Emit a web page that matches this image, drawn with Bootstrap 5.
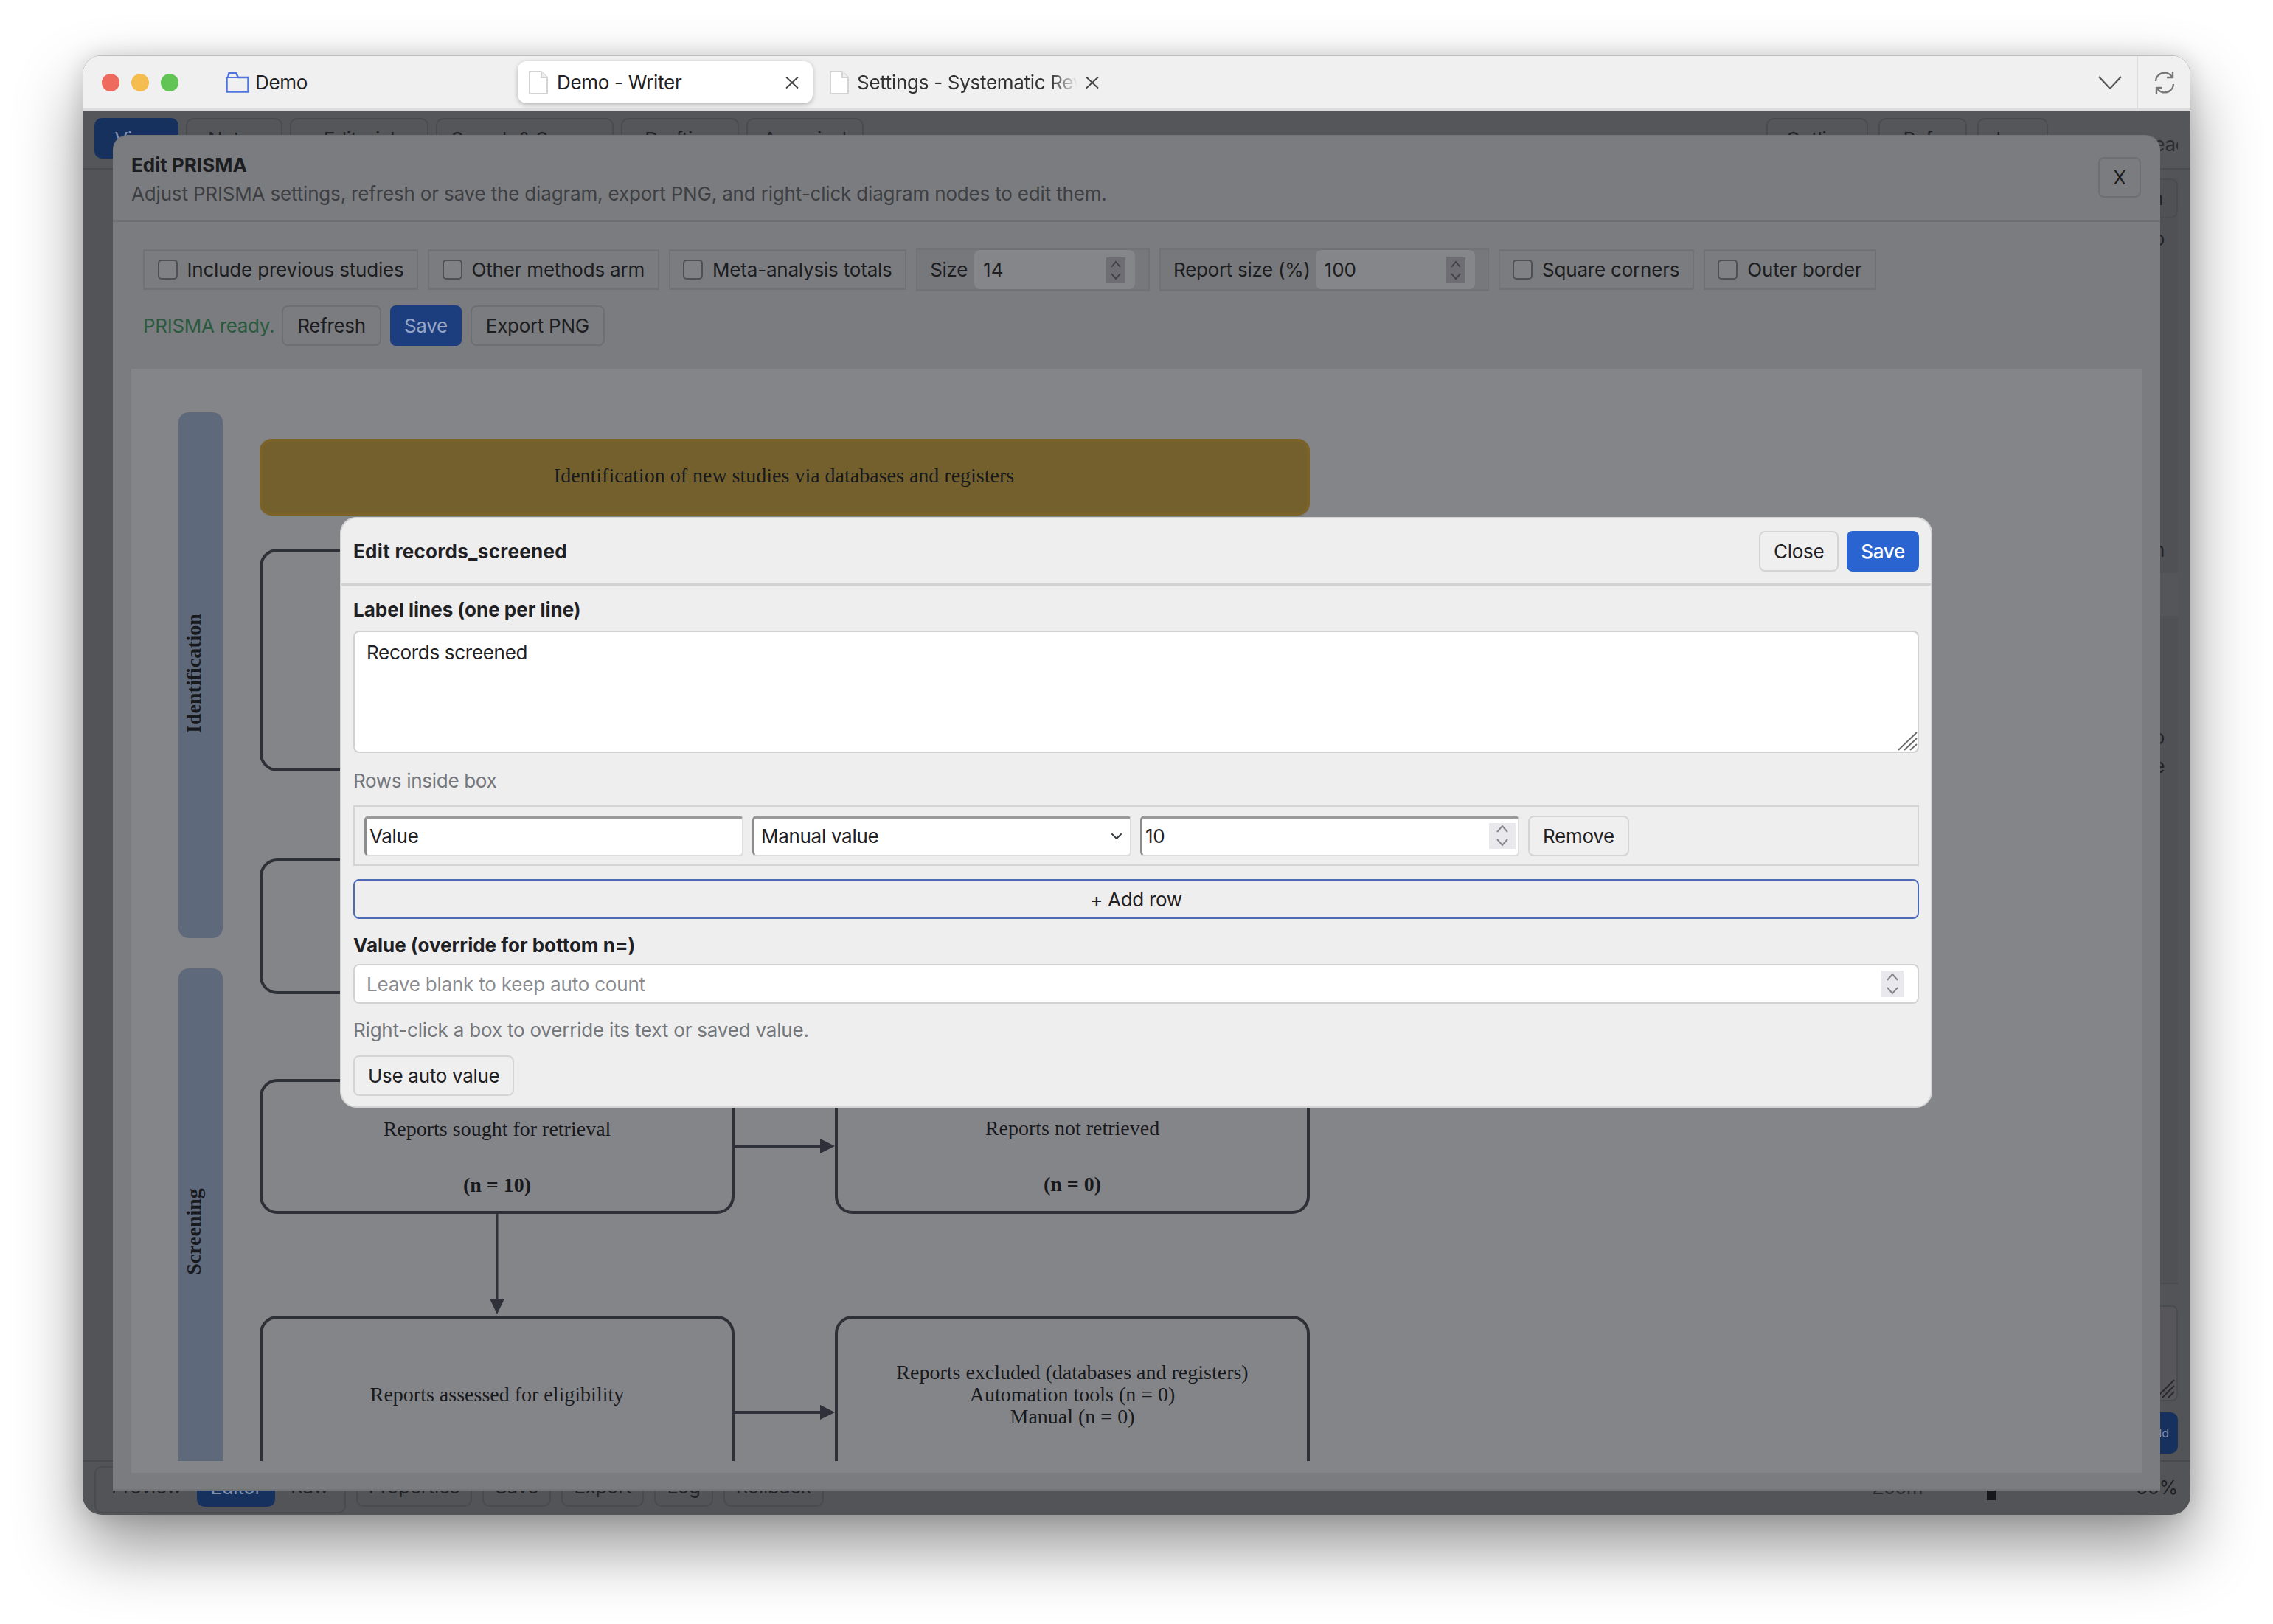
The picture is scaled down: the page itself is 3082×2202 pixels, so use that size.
<!DOCTYPE html>
<html lang="en">
<head>
    <meta charset="UTF-8">
    <meta name="viewport" content="width=device-width, initial-scale=1.0">
    <title>Edit PRISMA</title>
    <link href="https://cdn.jsdelivr.net/npm/bootstrap@5.3.0/dist/css/bootstrap.min.css" rel="stylesheet">
    <style>
        html, body { height: 100%; }
        body { background: #fff; font-family: Inter, "Liberation Sans", sans-serif; font-size: 26px; letter-spacing: -.3px; color: #1f2023; overflow: hidden; }

        /* browser frame */
        .frame { position: absolute; left: 112px; top: 75px; width: 2858px; height: 1979px; border-radius: 26px; overflow: hidden; background: #535458; }
        .frame-shadow { position: absolute; left: 112px; top: 75px; width: 2858px; height: 1979px; border-radius: 26px; box-shadow: 0 44px 90px rgba(0,0,0,.42), 0 0 30px rgba(0,0,0,.14); }
        .titlebar { height: 75px; background: #f0f0f0; border-bottom: 3px solid #dcdcdc; border-top: 1px solid #bdbdbd; }
        .light { width: 24px; height: 24px; border-radius: 50%; }
        .lights { margin-left: 26px; gap: 16px; width: 168px; }
        .tab-folder { gap: 8px; width: 396px; }
        .tab-active { width: 400px; height: 57px; background: #fff; border-radius: 12px; box-shadow: 0 2px 6px rgba(0,0,0,.25); padding: 0 19px 0 15px; gap: 12px; }
        .tab-idle { margin-left: 23px; gap: 11px; }
        .tab-clip { width: 299px; overflow: hidden; white-space: nowrap; -webkit-mask-image: linear-gradient(90deg, #000 88%, transparent 100%); mask-image: linear-gradient(90deg, #000 88%, transparent 100%); color: #333; }
        .chevron-tabs { margin-right: 20px; }
        .bar-side { width: 73px; height: 100%; border-left: 2px solid #dedede; }

        /* dimmed page behind the dialogs */
        .page-top { height: 80px; background: #55565a; border-bottom: 2px solid #4a4b4f; padding: 10px 0 0 16px; gap: 10px; overflow: hidden; }
        .page-btn { height: 55px; border: 2px solid #4a4b4f; border-radius: 10px; background: transparent; color: #222326; display: flex; justify-content: center; align-items: center; padding: 0 22px; white-space: nowrap; flex: none; }
        .page-btn.on { background: #17315f; border-color: #17315f; color: #7f8fb0; }
        .top-tabs > .page-btn { padding-top: 2px; }
        .top-tabs > .page-btn:nth-child(1) { width: 114px; }
        .top-tabs > .page-btn:nth-child(2) { width: 131px; }
        .top-tabs > .page-btn:nth-child(3) { width: 188px; }
        .top-tabs > .page-btn:nth-child(4) { width: 241px; }
        .top-tabs > .page-btn:nth-child(5) { width: 160px; }
        .top-tabs > .page-btn:nth-child(6) { width: 159px; }
        .right-tabs .page-btn { padding-top: 2px; }
        .right-btn-a { width: 138px; }
        .right-btn-b { width: 120px; }
        .right-btn-c { width: 96px; }
        .right-tabs { margin-left: auto; gap: 14px; }
        .page-status { width: 133px; overflow: hidden; white-space: nowrap; margin-left: 33px; margin-right: 17px; color: #2b2c30; padding-top: 2px; }
        .page-main { height: 1750px; }
        .page-side { margin-left: auto; width: 300px; padding-right: 17px; }
        .side-inner { background: #505155; height: 1499px; border-bottom: 2px solid #4a4b4f; text-align: right; padding-right: 18px; color: #222326; }
        .side-card { height: 54px; margin: 12px -18px 0 0; padding-right: 18px; border: 2px solid #4a4b4f; border-radius: 10px; line-height: 50px; }
        .side-o1 { margin-top: 8px; }
        .side-n { margin-top: 383px; }
        .side-band { height: 58px; margin: 12px -18px 0 0; background: #55565a; }
        .side-o2 { margin-top: 145px; }
        .side-area { height: 130px; margin-top: 29px; background: #57575b; border: 2px solid #4a4b4f; border-radius: 8px; position: relative; }
        .side-grip { position: absolute; right: 2px; bottom: 2px; }
        .side-save { display: block; margin: 15px 0 0 auto; height: 56px; width: 200px; background: #17315f; border: 0; border-radius: 10px; text-align: right; padding-right: 12px; color: #7f8fb0; }
        .page-bottom { height: 72px; border-top: 2px solid #48494d; padding: 6px 17px 0 16px; }
        .bottom-group { gap: 14px; }
        .page-btn.tall { padding: 0 15px; }
        .joined { border: 2px solid #4a4b4f; border-radius: 10px; }
        .joined .page-btn { border: 0; border-radius: 10px; height: 51px; }
        .joined .page-btn.tall { padding: 0 21px; }
        .joined .page-btn.on { padding: 0 18px; height: 53px; }
        .zoom-label { margin-left: auto; color: #2b2c30; width: 156px; margin-top: 9px; }
        .zoom-thumb { width: 12px; height: 37px; background: #17181c; margin: 9px 190px 0 0; }
        .zoom-value { margin-top: 9px; }

        /* outer dialog */
        .prisma-dlg { position: absolute; left: 41px; top: 108px; width: 2776px; height: 1838px; background: #7b7c7f; border: 0; border-top: 2px solid #737477; border-bottom: 2px solid #737477; border-radius: 20px 20px 0 0; color: #1c1d20; }
        .prisma-head { height: 116px; border-bottom: 3px solid #6f7073; padding: 0 26px 0 25px; }
        .prisma-title { font-weight: 700; line-height: 36px; margin-top: 21px; letter-spacing: 0; }
        .prisma-sub { color: #3d3f43; line-height: 36px; margin-top: 3px; letter-spacing: -.17px; }
        .prisma-close { width: 58px; height: 55px; margin-top: 28px; padding: 0; background: transparent; border: 2px solid #6e6f73; border-radius: 8px; color: #1c1d20; font-size: 26px; }
        .prisma-tools { padding: 35px 0 0 41px; gap: 19px; }
        .tool-row { gap: 13px; }
        .tool-row-actions { gap: 12px; }
        .tool-box { height: 55px; border: 2px solid #717276; border-top-width: 3px; border-bottom-width: 3px; padding: 0 17.5px; gap: 13px; white-space: nowrap; letter-spacing: -.2px; }
        .tool-box .form-check-input { width: 27px; height: 27px; margin: 0; background-color: #808184; border: 2px solid #4f5055; border-radius: 5px; flex: none; }
        .tool-num { padding: 0; height: 59px; gap: 0; padding-left: 17px; background: #77787b; letter-spacing: -.3px; }
        .tool-num .num-wrap { width: 218px; margin: 0 18px 0 9px; }
        .tool-num.wide .num-wrap { width: 216px; margin: 0 17px 0 7px; }
        .num-wrap { position: relative; }
        .num-wrap .form-control { height: 53px; background: #858689; border: 0; border-radius: 8px; color: #1c1d20; padding: 0 12px; font-size: 26px; }
        .spin { position: absolute; right: 13px; top: 10px; width: 26px; height: 35px; background: #6f6d74; display: flex; justify-content: center; align-items: center; }
        .ready-text { color: #2a5a3e; margin-right: -2px; }
        .btn-dim { height: 55px; padding: 0 19px; background: transparent; border: 2px solid #6e6f73; border-radius: 8px; color: #1c1d20; font-size: 26px; letter-spacing: inherit; }
        .btn-dim-blue { height: 55px; padding: 0 19px; background: #1c3d7e; border: 0; border-radius: 8px; color: #97a5c4; font-size: 26px; letter-spacing: inherit; }
        .diagram-panel { margin: 31px 25px 0 25px; height: 1497px; background: #848589; }
        .diagram-panel svg { display: block; }
        .pr-box { fill: none; stroke: #2e3037; stroke-width: 4; }
        .pr-line { stroke: #2e3139; fill: none; }
        .pr-head { fill: #2e3139; }
        .pr-text { font-family: "Liberation Serif", serif; font-size: 28px; fill: #18191c; text-anchor: middle; letter-spacing: 0; }
        .pr-bold { font-weight: 700; }

        /* inner dialog */
        .node-dlg { position: absolute; left: 349px; top: 626px; width: 2159px; background: #eeeeee; border: 2px solid #d4d4d4; border-radius: 22px; color: #1f2023; }
        .node-head { height: 91px; border-bottom: 3px solid #d2d2d2; padding: 0 16px; }
        .node-title { font-weight: 700; letter-spacing: .3px; }
        .node-actions { gap: 11px; }
        .node-btn { height: 55px; padding: 0 18px; background: #efefef; border: 2px solid #d4d4d4; border-radius: 8px; color: #1f2023; font-size: 26px; letter-spacing: inherit; }
        .node-save { height: 55px; padding: 0 19px; background: #2a64d0; border: 0; border-radius: 8px; color: #fff; font-size: 26px; font-weight: 500; letter-spacing: inherit; }
        .node-body { padding: 15px 16px 14px; }
        .node-label { font-weight: 700; line-height: 36px; margin: 0; letter-spacing: 0; }
        .node-muted { color: #74777b; line-height: 36px; }
        .node-help { margin-top: 18px; letter-spacing: -.2px; }
        .node-next { margin-top: 18px; }
        .node-area { height: 166px; margin-top: 10px; position: relative; }
        .node-area .form-control { height: 100%; resize: none; border: 2px solid #d2d2d2; border-radius: 8px; padding: 8px 16px; font-size: 26px; color: #1f2023; letter-spacing: inherit; }
        .grip { position: absolute; right: 2px; bottom: 3px; }
        .rows-box { height: 82px; margin-top: 15px; border: 2px solid #d4d4d4; padding: 0 13px; gap: 12px; }
        .rows-box .form-control, .rows-box .form-select { flex: 0 0 auto; height: 55px; width: 514px; border-style: solid; border-width: 4px 2px 2px 3px; border-color: #999 #ddd #ddd #8c8c8c; border-radius: 6px; padding: 0 4px 2px; font-size: 26px; color: #1f2023; letter-spacing: inherit; }
        .rows-box .form-select { padding-left: 9px; background-size: 16px 16px; background-position: right 10px center; }
        .rows-box .num-wrap { flex: 0 0 auto; }
        .rows-box .num-wrap .form-control { background: #fff; }
        .rows-box .spin, .value-wrap .spin { background: #e9e9ed; top: 10px; right: 5px; width: 36px; }
        .add-row { display: block; width: 100%; height: 54px; margin-top: 18px; padding: 0; background: transparent; border: 2px solid #4d6bb5; border-radius: 8px; color: #1f2023; font-size: 26px; letter-spacing: inherit; }
        .value-wrap { margin-top: 7px; }
        .value-wrap .form-control { height: 54px; background: #fff; border: 2px solid #d2d2d2; border-radius: 8px; padding: 0 16px; font-size: 26px; letter-spacing: -.2px; }
        .value-wrap .form-control::placeholder { color: #8a8c90; }
        .value-wrap .spin { top: 9px; right: 21px; width: 30px; height: 36px; }
    </style>
</head>
<body>
    <div class="frame-shadow"></div>
    <div class="frame">
        <div class="titlebar d-flex align-items-center">
            <div class="lights d-flex">
                <span class="light" style="background:#ee6a5f"></span>
                <span class="light" style="background:#f5bd4f"></span>
                <span class="light" style="background:#61c454"></span>
            </div>
            <div class="tab-folder d-flex align-items-center">
                <svg width="32" height="29" viewBox="0 0 32 29"><path d="M1.5 8V27.5H30.500V8H17L14 2H4.500L3 8" fill="none" stroke="#4f75e0" stroke-width="2.500"/><path d="M1.500 8H30.500" stroke="#4f75e0" stroke-width="2"/></svg>
                <span>Demo</span>
            </div>
            <div class="tab-active d-flex align-items-center">
                <svg width="26" height="32" viewBox="0 0 26 32"><path d="M1 1H17L25 9V31H1Z" fill="#fff" stroke="#d4d4d4" stroke-width="2"/><path d="M17 1V9H25" fill="#efefef" stroke="#d4d4d4" stroke-width="2"/></svg>
                <span class="flex-grow-1">Demo - Writer</span>
                <svg width="18" height="18" viewBox="0 0 18 18"><path d="M1 1.500L17 16.500M17 1.500L1 16.500" stroke="#444" stroke-width="1.800"/></svg>
            </div>
            <div class="tab-idle d-flex align-items-center">
                <svg width="26" height="32" viewBox="0 0 26 32"><path d="M1 1H17L25 9V31H1Z" fill="#fff" stroke="#d4d4d4" stroke-width="2"/><path d="M17 1V9H25" fill="#efefef" stroke="#d4d4d4" stroke-width="2"/></svg>
                <span class="tab-clip">Settings - Systematic Review</span>
                <svg width="18" height="18" viewBox="0 0 18 18"><path d="M1 1.500L17 16.500M17 1.500L1 16.500" stroke="#444" stroke-width="1.800"/></svg>
            </div>
            <div class="ms-auto d-flex align-items-center h-100">
                <svg class="chevron-tabs" width="32" height="18" viewBox="0 0 32 18"><path d="M1 1L16 17L31 1" fill="none" stroke="#555" stroke-width="2.200"/></svg>
                <div class="bar-side d-flex align-items-center justify-content-center">
                    <svg width="32" height="32" viewBox="0 0 32 32" fill="none" stroke="#777" stroke-width="2.400"><path d="M4 14A12 12 0 0 1 26 8"/><path d="M27 1V9H19"/><path d="M28 18A12 12 0 0 1 6 24"/><path d="M5 31V23H13"/></svg>
                </div>
            </div>
        </div>

        <div class="page-top d-flex top-tabs">
            <span class="page-btn on">View</span>
            <span class="page-btn">Notes</span>
            <span class="page-btn">Editorial</span>
            <span class="page-btn">Search &amp; Screen</span>
            <span class="page-btn">Drafting</span>
            <span class="page-btn">Appraisal</span>
            <div class="right-tabs d-flex">
                <span class="page-btn right-btn-a">Outline</span>
                <span class="page-btn right-btn-b">Refs</span>
                <span class="page-btn right-btn-c">Log</span>
            </div>
            <span class="page-status align-self-center">Project ready</span>
        </div>
        <div class="page-main d-flex">
            <div class="page-side">
                <div class="side-inner">
                    <div class="side-card">Add section</div>
                    <div class="side-o1">Intro</div>
                    <div class="side-n">Discussion</div>
                    <div class="side-band"></div>
                    <div class="side-o2">Demo</div>
                    <div>Note</div>
                </div>
                <div class="side-area">
                    <svg class="side-grip" width="26" height="26" viewBox="0 0 26 26" stroke="#2a2b2e" stroke-width="2"><path d="M1 25L25 1M9 25L25 9M17 25L25 17"/></svg>
                </div>
                <button class="side-save btn">Add</button>
            </div>
        </div>
        <div class="page-bottom d-flex">
            <div class="bottom-group d-flex">
                <div class="joined d-flex">
                    <span class="page-btn tall">Preview</span>
                    <span class="page-btn on">Editor</span>
                    <span class="page-btn tall">Raw</span>
                </div>
                <span class="page-btn tall">Properties</span>
                <span class="page-btn tall">Save</span>
                <span class="page-btn tall">Export</span>
                <span class="page-btn tall">Log</span>
                <span class="page-btn tall">Rollback</span>
            </div>
            <span class="zoom-label">Zoom</span>
            <span class="zoom-thumb"></span>
            <span class="zoom-value">50%</span>
        </div>

        <!-- Edit PRISMA dialog, dimmed under the node editor -->
        <div class="prisma-dlg modal-content">
            <div class="prisma-head d-flex justify-content-between align-items-start">
                <div>
                    <div class="prisma-title">Edit PRISMA</div>
                    <div class="prisma-sub">Adjust PRISMA settings, refresh or save the diagram, export PNG, and right-click diagram nodes to edit them.</div>
                </div>
                <button class="prisma-close btn">X</button>
            </div>
            <div class="prisma-tools d-flex flex-column">
                <div class="tool-row d-flex align-items-center">
                    <label class="tool-box d-flex align-items-center"><input class="form-check-input" type="checkbox">Include previous studies</label>
                    <label class="tool-box d-flex align-items-center"><input class="form-check-input" type="checkbox">Other methods arm</label>
                    <label class="tool-box d-flex align-items-center"><input class="form-check-input" type="checkbox">Meta-analysis totals</label>
                    <label class="tool-box tool-num d-flex align-items-center">Size
                        <span class="num-wrap"><input class="form-control" type="text" value="14"><span class="spin"><svg width="16" height="29" viewBox="0 0 16 29" fill="none" stroke="#3f4045" stroke-width="1.800"><path d="M2 10L8 3L14 10M2 19L8 26L14 19"/></svg></span></span>
                    </label>
                    <label class="tool-box tool-num wide d-flex align-items-center">Report size (%)
                        <span class="num-wrap"><input class="form-control" type="text" value="100"><span class="spin"><svg width="16" height="29" viewBox="0 0 16 29" fill="none" stroke="#3f4045" stroke-width="1.800"><path d="M2 10L8 3L14 10M2 19L8 26L14 19"/></svg></span></span>
                    </label>
                    <label class="tool-box d-flex align-items-center"><input class="form-check-input" type="checkbox">Square corners</label>
                    <label class="tool-box d-flex align-items-center"><input class="form-check-input" type="checkbox">Outer border</label>
                </div>
                <div class="tool-row tool-row-actions d-flex align-items-center">
                    <span class="ready-text">PRISMA ready.</span>
                    <button class="btn btn-dim">Refresh</button>
                    <button class="btn btn-dim-blue">Save</button>
                    <button class="btn btn-dim">Export PNG</button>
                </div>
            </div>
            <div class="diagram-panel">
                <svg width="2726" height="1481" viewBox="178 499 2726 1481">
                    <rect x="242" y="558" width="60" height="713" rx="14" fill="#5e6a7c"/>
                    <rect x="242" y="1312" width="60" height="720" rx="14" fill="#5e6a7c"/>
                    <text class="pr-text pr-bold" transform="translate(272 912) rotate(-90)">Identification</text>
                    <text class="pr-text pr-bold" transform="translate(272 1669) rotate(-90)">Screening</text>

                    <rect x="354" y="596" width="1420" height="100" rx="14" fill="#74602c" stroke="#7a6228" stroke-width="4"/>
                    <text class="pr-text" x="1063" y="653">Identification of new studies via databases and registers</text>

                    <rect class="pr-box" x="354" y="745" width="640" height="298" rx="22"/>
                    <rect class="pr-box" x="354" y="1165" width="640" height="180" rx="22"/>
                    <rect class="pr-box" x="354" y="1464" width="640" height="179" rx="22"/>
                    <rect class="pr-box" x="1134" y="1464" width="640" height="179" rx="22"/>
                    <text class="pr-text" x="674" y="1539">Reports sought for retrieval</text>
                    <text class="pr-text pr-bold" x="674" y="1615">(n = 10)</text>
                    <text class="pr-text" x="1454" y="1538">Reports not retrieved</text>
                    <text class="pr-text pr-bold" x="1454" y="1614">(n = 0)</text>
                    <path class="pr-line" stroke-width="4" d="M995 1553H1115"/>
                    <path class="pr-head" d="M1112 1543L1132 1553L1112 1563Z"/>
                    <path class="pr-line" stroke-width="3" d="M674 1645V1762"/>
                    <path class="pr-head" d="M664 1760H684L674 1781Z"/>

                    <rect class="pr-box" x="354" y="1785" width="640" height="300" rx="22"/>
                    <rect class="pr-box" x="1134" y="1785" width="640" height="300" rx="22"/>
                    <text class="pr-text" x="674" y="1899">Reports assessed for eligibility</text>
                    <text class="pr-text" x="1454" y="1869">Reports excluded (databases and registers)</text>
                    <text class="pr-text" x="1454" y="1899">Automation tools (n = 0)</text>
                    <text class="pr-text" x="1454" y="1929">Manual (n = 0)</text>
                    <path class="pr-line" stroke-width="4" d="M995 1914H1115"/>
                    <path class="pr-head" d="M1112 1904L1132 1914L1112 1924Z"/>
                </svg>
            </div>
        </div>

        <!-- node editor -->
        <div class="node-dlg modal-content">
            <div class="node-head d-flex justify-content-between align-items-center">
                <span class="node-title">Edit records_screened</span>
                <div class="node-actions d-flex">
                    <button class="btn node-btn">Close</button>
                    <button class="btn node-save">Save</button>
                </div>
            </div>
            <div class="node-body">
                <label class="node-label d-block">Label lines (one per line)</label>
                <div class="node-area">
                    <textarea class="form-control">Records screened</textarea>
                    <svg class="grip" width="27" height="26" viewBox="0 0 27 26" stroke="#6a6a6a" stroke-width="1.800"><path d="M1 25L26 1M9 25L26 9M17 25L26 17"/></svg>
                </div>
                <div class="node-muted mt-3 pt-1">Rows inside box</div>
                <div class="rows-box d-flex align-items-center">
                    <input class="form-control" type="text" value="Value">
                    <select class="form-select"><option>Manual value</option></select>
                    <span class="num-wrap">
                        <input class="form-control" type="text" value="10">
                        <span class="spin"><svg width="18" height="32" viewBox="0 0 18 32" fill="none" stroke="#85868c" stroke-width="2"><path d="M2 11L9 3L16 11M2 21L9 29L16 21"/></svg></span>
                    </span>
                    <button class="btn node-btn">Remove</button>
                </div>
                <button class="btn add-row">+ Add row</button>
                <label class="node-label d-block node-next">Value (override for bottom n=)</label>
                <div class="num-wrap value-wrap">
                    <input class="form-control" type="text" placeholder="Leave blank to keep auto count">
                    <span class="spin"><svg width="18" height="32" viewBox="0 0 18 32" fill="none" stroke="#85868c" stroke-width="2"><path d="M2 11L9 3L16 11M2 21L9 29L16 21"/></svg></span>
                </div>
                <div class="node-muted node-help">Right-click a box to override its text or saved value.</div>
                <button class="btn node-btn mt-3">Use auto value</button>
            </div>
        </div>
    </div>
    <script src="https://cdn.jsdelivr.net/npm/bootstrap@5.3.0/dist/js/bootstrap.bundle.min.js"></script>
</body>
</html>
